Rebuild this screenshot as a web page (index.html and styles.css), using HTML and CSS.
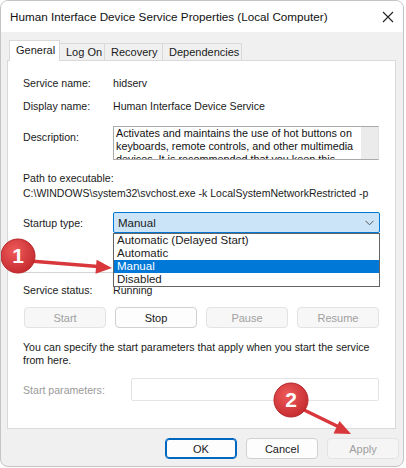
FILE: index.html
```html
<!DOCTYPE html>
<html lang="en">
<head>
<meta charset="UTF-8">
<meta name="viewport" content="width=device-width, initial-scale=1.0">
<title>Human Interface Device Service Properties</title>
<link rel="stylesheet" href="styles.css">
</head>
<body>
<div class="window">
  <div class="titlebar">
    <span class="title">Human Interface Device Service Properties (Local Computer)</span>
    <svg class="close" width="12" height="12" viewBox="0 0 12 12">
      <path d="M1 1 L11 11 M11 1 L1 11" stroke="#222" stroke-width="1.1" fill="none"/>
    </svg>
  </div>

  <div class="tabs">
    <div class="tab active">General</div>
    <div class="tab">Log On</div>
    <div class="tab">Recovery</div>
    <div class="tab">Dependencies</div>
  </div>

  <div class="panel">
    <div class="row r-name">
      <span class="label">Service name:</span>
      <span>hidserv</span>
    </div>
    <div class="row r-display">
      <span class="label">Display name:</span>
      <span>Human Interface Device Service</span>
    </div>
    <div class="row r-desc">
      <span class="label desc-label">Description:</span>
      <div class="desc-box">
        <div class="desc-text">Activates and maintains the use of hot buttons on keyboards, remote controls, and other multimedia devices. It is recommended that you keep this service running.</div>
        <div class="scroll"></div>
      </div>
    </div>
    <div class="path-label">Path to executable:</div>
    <div class="path">C:\WINDOWS\system32\svchost.exe -k LocalSystemNetworkRestricted -p</div>

    <div class="row r-startup">
      <span class="label">Startup type:</span>
      <div class="combo">
        <span>Manual</span>
        <svg class="chevron" width="9" height="6" viewBox="0 0 9 6">
          <path d="M0.5 0.8 L4.5 4.8 L8.5 0.8" stroke="#555" stroke-width="1" fill="none"/>
        </svg>
        <ul class="dropdown">
          <li>Automatic (Delayed Start)</li>
          <li>Automatic</li>
          <li class="selected">Manual</li>
          <li>Disabled</li>
        </ul>
      </div>
    </div>

    <div class="separator"></div>

    <div class="row r-status">
      <span class="label">Service status:</span>
      <span>Running</span>
    </div>

    <div class="actions">
      <button class="btn" disabled>Start</button>
      <button class="btn">Stop</button>
      <button class="btn" disabled>Pause</button>
      <button class="btn" disabled>Resume</button>
    </div>

    <p class="hint">You can specify the start parameters that apply when you start the service from here.</p>

    <div class="row r-params">
      <span class="label muted params-label">Start parameters:</span>
      <div class="params-box"></div>
    </div>
  </div>

  <div class="footer">
    <button class="btn default">OK</button>
    <button class="btn">Cancel</button>
    <button class="btn" disabled>Apply</button>
  </div>

  <!-- callouts drawn over the dialog -->
  <svg class="callouts" width="406" height="468" viewBox="0 0 406 468">
    <defs>
      <radialGradient id="badge" cx="0.4" cy="0.35" r="0.7">
        <stop offset="0" stop-color="#ee5a5a"/>
        <stop offset="1" stop-color="#c42a2e"/>
      </radialGradient>
    </defs>
    <line x1="30" y1="261" x2="98" y2="266.6" stroke="#d8383c" stroke-width="3.5" stroke-linecap="round"/>
    <polygon points="112,268 96.6,259.8 95.5,273.7" fill="#d8383c"/>
    <circle cx="18" cy="256" r="17" fill="url(#badge)" stroke="#b52427" stroke-width="1"/>
    <text x="18" y="263" text-anchor="middle" class="badge-num">1</text>

    <line x1="300" y1="408" x2="338" y2="426.5" stroke="#d8383c" stroke-width="3.5" stroke-linecap="round"/>
    <polygon points="351,434 339.5,420.9 333.5,433.5" fill="#d8383c"/>
    <circle cx="291" cy="400" r="17" fill="url(#badge)" stroke="#b52427" stroke-width="1"/>
    <text x="291" y="407" text-anchor="middle" class="badge-num">2</text>
  </svg>
</div>
</body>
</html>
```

FILE: styles.css
```css
body {
  margin: 0;
  background-color: #fff;
  font-family: "Liberation Sans", Arial, sans-serif;
  font-size: 10.6px;
  color: #1a1a1a;
}

.window {
  position: relative;
  width: 402px;
  height: 465px;
  border: 1px solid #c4c4c4;
  border-radius: 8px;
  background-color: #f0f0f0;
  overflow: hidden;
}

.titlebar {
  display: flex;
  align-items: center;
  justify-content: space-between;
  height: 31px;
  padding: 0 9px 0 9px;
  background-color: #fff;
  box-sizing: border-box;
}

.title {
  font-size: 11.7px;
  color: #111;
}

.close {
  margin-top: 1px;
}

/* Tabs */
.tabs {
  display: flex;
  align-items: flex-end;
  height: 28px;
  padding-left: 8px;
}

.tab {
  height: 17px;
  line-height: 16px;
  padding: 0 0 0 6px;
  border: 1px solid #d9d9d9;
  border-bottom: none;
  margin-left: -1px;
  background-color: #f0f0f0;
  white-space: nowrap;
  box-sizing: border-box;
  font-size: 11px;
}

.tab:nth-child(1) { width: 51px; }
.tab:nth-child(2) { width: 46px; }
.tab:nth-child(3) { width: 59px; }
.tab:nth-child(4) { width: 80px; }

.tab.active {
  position: relative;
  height: 21px;
  line-height: 19px;
  background-color: #fff;
  margin-left: 0;
  margin-bottom: -1px;
  z-index: 1;
}

/* Panel */
.panel {
  width: 389px;
  height: 369px;
  margin-left: 6px;
  background-color: #fff;
  border: 1px solid #d9d9d9;
  padding: 14px 0 0 15px;
  box-sizing: border-box;
}

.row {
  display: flex;
  align-items: center;
  line-height: 16px;
}

.label {
  width: 90px;
  flex-shrink: 0;
}

.muted {
  color: #9a9a9a;
}

.r-display {
  margin-top: 7px;
}

.r-desc {
  align-items: flex-start;
  margin-top: 12px;
}

.desc-label {
  margin-top: 3px;
}

.desc-box {
  display: flex;
  width: 266px;
  height: 34px;
  border: 1px solid #aaa;
  border-right-color: #e0e0e0;
  box-sizing: border-box;
  overflow: hidden;
}

.desc-text {
  flex: 1;
  padding: 0 2px;
  font-size: 10.8px;
  line-height: 13px;
  color: #111;
}

.scroll {
  width: 17px;
  background-color: #ebebeb;
}

.path-label {
  margin-top: 11px;
  line-height: 15px;
}

.path {
  line-height: 15px;
  font-size: 10.5px;
}

/* Startup type combo */
.r-startup {
  margin-top: 11px;
}

.combo {
  position: relative;
  display: flex;
  align-items: center;
  justify-content: space-between;
  width: 267px;
  height: 21px;
  padding: 0 5px 0 4px;
  border: 1px solid #0078d4;
  border-radius: 2px;
  background-color: #cce4f7;
  box-sizing: border-box;
  font-size: 11.5px;
}

.dropdown {
  position: absolute;
  top: 20px;
  left: -1px;
  width: 267px;
  margin: 0;
  padding: 0;
  list-style: none;
  border: 1px solid #646464;
  background-color: #fff;
  box-sizing: border-box;
  z-index: 2;
}

.dropdown li {
  height: 13px;
  line-height: 13px;
  padding-left: 3px;
  font-size: 11.5px;
}

.dropdown li.selected {
  background-color: #0078d7;
  color: #fff;
}

.separator {
  width: 356px;
  height: 1px;
  margin-top: 39px;
  background-color: #d4d4d4;
}

.r-status {
  margin-top: 9px;
}

/* Buttons */
.actions {
  display: grid;
  grid-template-columns: repeat(4, 82px);
  gap: 9px;
  margin-top: 9px;
  padding-left: 1px;
}

.btn {
  height: 21px;
  padding: 0;
  font-family: "Liberation Sans", Arial, sans-serif;
  font-size: 11px;
  color: #1a1a1a;
  background-color: #fdfdfd;
  border: 1px solid #d0d0d0;
  border-radius: 4px;
}

.btn:disabled {
  color: #a0a0a0;
  background-color: #f7f7f7;
  border-color: #e3e3e3;
}

.hint {
  width: 362px;
  margin: 13px 0 0;
  line-height: 13px;
}

.r-params {
  margin-top: 11px;
}

.params-label {
  width: 108px;
}

.params-box {
  width: 248px;
  height: 23px;
  border: 1px solid #e3e3e3;
  border-radius: 2px;
  box-sizing: border-box;
}

/* Footer */
.footer {
  display: flex;
  justify-content: flex-end;
  gap: 9px;
  padding: 9px 4px 0 0;
}

.footer .btn {
  width: 72px;
  height: 21px;
}

.footer .btn:disabled {
  background-color: #f5f5f5;
}

.btn.default {
  border: 1px solid #0067c0;
  box-shadow: inset 0 0 0 1px #0067c0;
}

/* Callouts */
.callouts {
  position: absolute;
  left: -1px;
  top: -1px;
  pointer-events: none;
  z-index: 5;
}

.badge-num {
  font-family: "Liberation Sans", Arial, sans-serif;
  font-size: 21px;
  font-weight: bold;
  fill: #fff;
}
```
